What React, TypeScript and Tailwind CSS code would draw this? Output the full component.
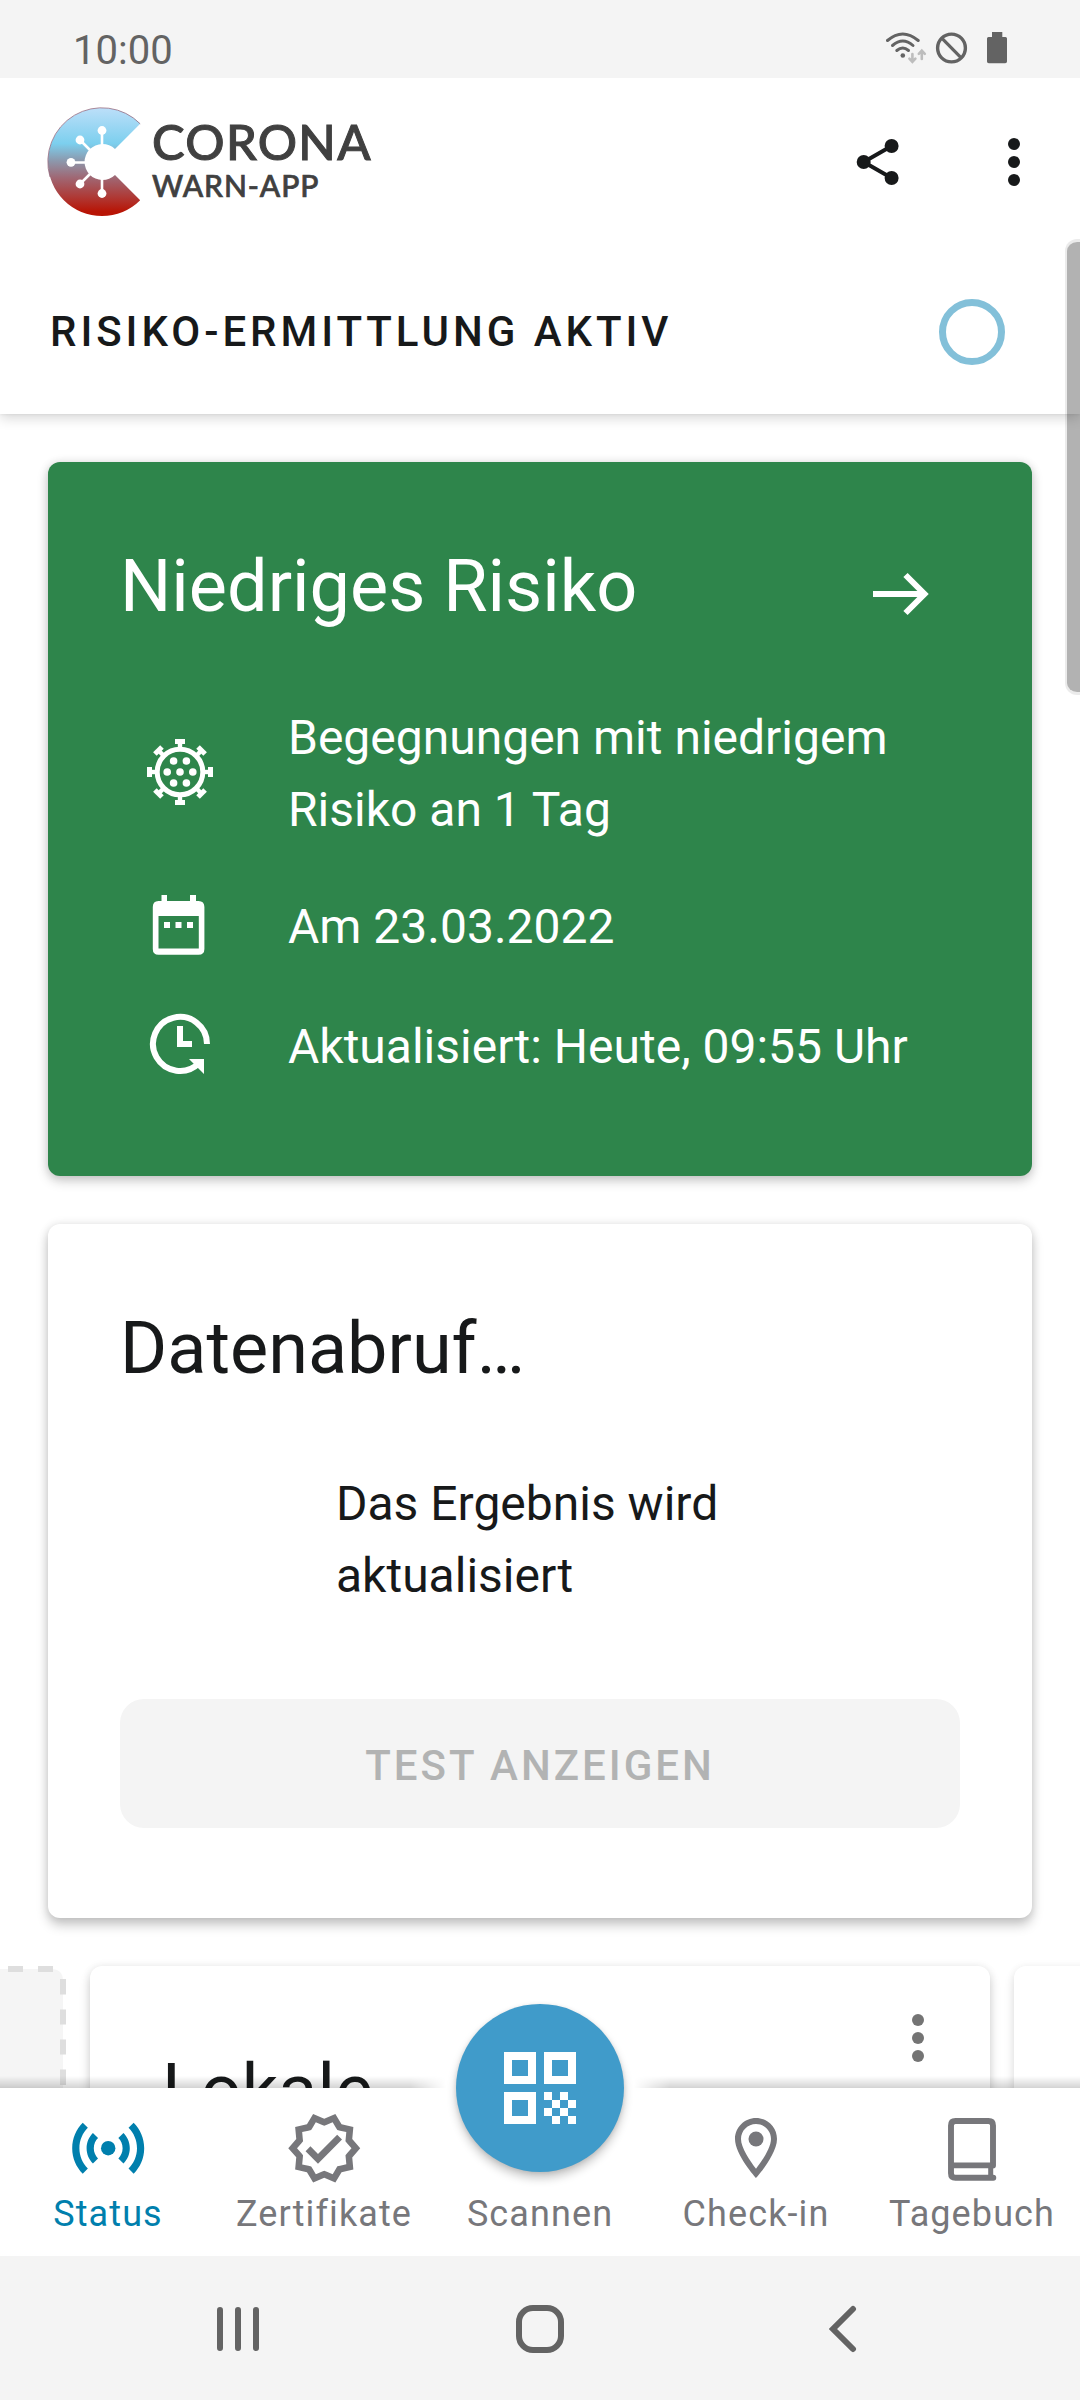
import React from 'react';
import { MdOutlineVerified } from 'react-icons/md';

function StatusBar() {
  return (
    <div className="relative z-20 flex h-[78px] shrink-0 items-center justify-between bg-[#f4f4f4] pl-[73px] pr-[60px] text-[#636363]">
      <span className="pt-[24px] text-[40px] leading-[56px]">10:00</span>
      <svg width="136" height="40" viewBox="884 28 136 40" className="mt-[18px]" fill="none" stroke="#636363">
        <g strokeWidth="3" strokeLinecap="round">
          <path d="M887.5 40.5Q902.6 27.5 918.2 40.5" />
          <path d="M892.5 45.5Q902.8 36.5 913 45.5" />
          <path d="M896.8 50.5Q902.8 45.5 908.5 50.5" />
        </g>
        <circle cx="902.8" cy="55.5" r="2.3" fill="#636363" stroke="none" />
        <g stroke="#bdbdbd" strokeWidth="2.6" strokeLinecap="round">
          <path d="M912.4 54V61M909.4 58.6L912.4 61.8L915.4 58.6" />
          <path d="M921.8 59V51.5M918.8 53.8L921.8 50.6L924.8 53.8" />
        </g>
        <circle cx="951.5" cy="48" r="13.9" strokeWidth="3.4" />
        <path d="M941.8 38.2L961.2 57.8" strokeWidth="3.2" />
        <path d="M992 32H1002.3V37H1005.5Q1007 37 1007 38.5V61.5Q1007 63.3 1005.2 63.3H988.8Q987 63.3 987 61.5V38.5Q987 37 988.5 37H992Z" fill="#636363" stroke="none" />
      </svg>
    </div>
  );
}

function Logo() {
  return (
    <div className="flex items-start">
      <svg width="94" height="110" viewBox="47 107 94 110">
        <defs>
          <linearGradient id="logo" x1="0" y1="108" x2="0" y2="216" gradientUnits="userSpaceOnUse">
            <stop offset="0" stopColor="#bcdff9" />
            <stop offset="0.33" stopColor="#7ccfee" />
            <stop offset="0.48" stopColor="#8b9bb0" />
            <stop offset="0.65" stopColor="#a06672" />
            <stop offset="0.84" stopColor="#b03530" />
            <stop offset="0.96" stopColor="#b81405" />
          </linearGradient>
        </defs>
        <path d="M140.200 123.800A54 54 0 1 0 140.200 200.200L115 175A18 18 0 1 1 115 149Z" fill="url(#logo)" />
        <path d="M140.200 123.800A54 54 0 0 0 50 177" fill="none" stroke="#8c5a70" strokeOpacity="0.7" strokeWidth="1" />
        <g stroke="#fff" strokeWidth="2.600">
          <path d="M102 146V131M90.500 150.500L80 140M86 162.500H71M90.500 173.500L80 184M102 178V193" />
        </g>
        <g fill="#fff">
          <circle cx="102" cy="130.500" r="4.400" />
          <circle cx="80" cy="140" r="4.400" />
          <circle cx="71" cy="162.300" r="4.400" />
          <circle cx="80" cy="184" r="4.400" />
          <circle cx="102" cy="193.500" r="4.400" />
        </g>
      </svg>
      <div className="flex flex-col pl-[11px] pt-[9px] font-['Lato',sans-serif] text-[#404040]">
        <span className="text-[49px] font-medium leading-[50px] tracking-[1.300px] [-webkit-text-stroke:1px_#404040]">CORONA</span>
        <span className="pt-[1px] text-[30px] font-medium leading-[36px] tracking-[0.900px] [-webkit-text-stroke:0.7px_#404040]">WARN-APP</span>
      </div>
    </div>
  );
}

function Dots({ className }: { className: string }) {
  return (
    <svg width="12" height="48" viewBox="0 0 12 48" className={className} fill="currentColor">
      <circle cx="6" cy="6" r="6" />
      <circle cx="6" cy="24" r="6" />
      <circle cx="6" cy="42" r="6" />
    </svg>
  );
}

function Header() {
  return (
    <header className="relative z-10 h-[336px] shrink-0 bg-white shadow-[0_4px_12px_rgba(0,0,0,0.16),0_0_3px_rgba(0,0,0,0.08)]">
      <div className="flex h-[168px] items-center justify-between pl-[47px] pr-[60px]">
        <Logo />
        <div className="flex items-center gap-[108px] text-[#17191a]">
          <svg width="44" height="48" viewBox="856 138 44 48" fill="#17191a">
            <path d="M891.600 146L863.700 162L891.600 178" fill="none" stroke="#17191a" strokeWidth="4" />
            <circle cx="863.700" cy="162" r="7" />
            <circle cx="891.600" cy="146" r="7" />
            <circle cx="891.600" cy="178" r="7" />
          </svg>
          <Dots className="" />
        </div>
      </div>
      <div className="flex h-[171px] items-center justify-between pl-[50px] pr-[75px]">
        <span className="text-[42px] font-medium leading-[56px] tracking-[3.950px] text-[#17191a]">RISIKO-ERMITTLUNG AKTIV</span>
        <div className="size-[66px] rounded-full border-[7px] border-[#83c0d9]" />
      </div>
    </header>
  );
}

function VirusIcon() {
  const spikes = [0, 45, 90, 135, 180, 225, 270, 315];
  const dots = [[0, 0], [-12.8, 0], [12.8, 0], [-6.4, -11], [6.4, -11], [-6.4, 11], [6.4, 11]];
  return (
    <svg width="68" height="68" viewBox="-34 -34 68 68" fill="#fff" className="mb-[4px]">
      <circle r="22.800" fill="none" stroke="#fff" strokeWidth="5" />
      {spikes.map((a) => (
        <g key={a} transform={`rotate(${a})`}>
          <rect x="-2.200" y="-30" width="4.400" height="7" />
          <rect x="-5" y="-33" width="10" height="5" />
        </g>
      ))}
      {dots.map(([x, y]) => (
        <circle key={`${x},${y}`} cx={x} cy={y} r="3.800" />
      ))}
    </svg>
  );
}

function CalendarIcon() {
  return (
    <svg width="54" height="62" viewBox="152 893 54 62" fill="#fff" className="mb-[5px] mr-[2px]">
      <path fillRule="evenodd" d="M161.500 894H167V900H190V894H196V900H198.500Q204.400 900 204.400 906V948Q204.400 953.800 198.500 953.800H158.500Q152.800 953.800 152.800 948V906Q152.800 900 158.500 900H161.500ZM158.500 915V947.500H198.800V915Z" />
      <path d="M164 921H170V927H164ZM175.500 921H181.500V927H175.500ZM187 921H193V927H187Z" />
    </svg>
  );
}

function ClockIcon() {
  return (
    <svg width="62" height="62" viewBox="149 1013 62 62" fill="none" className="mb-[6px]">
      <path d="M207 1044A27 27 0 1 0 199 1063.100" stroke="#fff" strokeWidth="6" />
      <path d="M177 1026H183V1041H192V1047H177ZM189 1059H204V1074Z" fill="#fff" />
    </svg>
  );
}

function RiskRow({ icon, children }: { icon: React.ReactNode; children: React.ReactNode }) {
  return (
    <div className="flex items-center">
      <div className="flex w-[120px] shrink-0 justify-center">{icon}</div>
      <p className="pl-[48px] text-[48px] leading-[72px]">{children}</p>
    </div>
  );
}

function RiskCard() {
  return (
    <section className="h-[714px] shrink-0 rounded-[12px] bg-[#2e854b] px-[72px] text-white shadow-[0_5px_12px_rgba(0,0,0,0.2),0_0_10px_rgba(0,0,0,0.1)]">
      <div className="flex h-[240px] items-start justify-between pt-[83px]">
        <h2 className="text-[72px] leading-[84px]">Niedriges Risiko</h2>
        <svg width="56" height="46" viewBox="0 0 56 46" className="mr-[31px] mt-[26px]" fill="none" stroke="#fff" strokeWidth="6">
          <path d="M0 23H50M32.500 4L51.500 23L32.500 42" />
        </svg>
      </div>
      <RiskRow icon={<VirusIcon />}>
        Begegnungen mit niedrigem
        <br />
        Risiko an 1 Tag
      </RiskRow>
      <div className="pt-[45px]">
        <RiskRow icon={<CalendarIcon />}>Am 23.03.2022</RiskRow>
      </div>
      <div className="pt-[48px]">
        <RiskRow icon={<ClockIcon />}>Aktualisiert: Heute, 09:55 Uhr</RiskRow>
      </div>
    </section>
  );
}

function TestCard() {
  return (
    <section className="flex h-[694px] shrink-0 flex-col rounded-[12px] bg-white px-[72px] text-[#17191a] shadow-[0_7px_12px_rgba(0,0,0,0.22),0_0_10px_rgba(0,0,0,0.1)]">
      <h2 className="pt-[83px] text-[72px] leading-[84px]">Datenabruf…</h2>
      <p className="pl-[216px] pt-[77px] text-[48px] leading-[72px]">
        Das Ergebnis wird
        <br />
        aktualisiert
      </p>
      <button className="mt-[87px] flex h-[129px] items-center justify-center rounded-[24px] bg-[#f4f4f4] pt-[3px] text-[42px] font-medium tracking-[3px] text-[#b2b3b3]">
        TEST ANZEIGEN
      </button>
    </section>
  );
}

function Carousel() {
  return (
    <div className="flex h-[180px] shrink-0 gap-[24px]">
      <svg width="66" height="180" viewBox="0 0 66 180" className="shrink-0">
        <path d="M0 3H51Q63 3 63 15V180H0Z" fill="#f5f5f5" />
        <path d="M8 3H23M38 3H53M63 13V28.500M63 43.500V58.500M63 73.500V88.500M63 103.500V119M63 133.500V149" stroke="#dedede" strokeWidth="6" fill="none" />
      </svg>
      <section className="flex w-[900px] shrink-0 items-start justify-between rounded-[12px] bg-white pl-[72px] pr-[66px] shadow-[0_6px_11px_rgba(0,0,0,0.17),0_0_8px_rgba(0,0,0,0.07)]">
        <h2 className="pt-[83px] text-[72px] leading-[84px] text-[#17191a]">Lokale</h2>
        <Dots className="mt-[48px] text-[#747474]" />
      </section>
      <section className="w-[900px] shrink-0 rounded-[12px] bg-white shadow-[0_6px_11px_rgba(0,0,0,0.12),0_0_8px_rgba(0,0,0,0.05)]" />
    </div>
  );
}

function SensorsIcon() {
  return (
    <svg width="86.400" height="86.400" viewBox="0 0 24 24" fill="currentColor">
      <path d="M7.760 16.240C6.670 15.160 6 13.660 6 12s.67-3.160 1.760-4.240l1.420 1.420C8.450 9.900 8 10.900 8 12c0 1.100.45 2.100 1.170 2.830l-1.410 1.410zM16.240 16.240C17.330 15.160 18 13.660 18 12s-.67-3.160-1.760-4.240l-1.420 1.420C15.550 9.900 16 10.900 16 12c0 1.100-.45 2.100-1.170 2.830l1.410 1.410zM20 12c0 2.210-.9 4.210-2.350 5.650l1.420 1.420C20.880 17.260 22 14.760 22 12s-1.120-5.260-2.930-7.070l-1.420 1.420C19.100 7.790 20 9.790 20 12zM6.350 6.350 4.930 4.930C3.120 6.740 2 9.240 2 12s1.120 5.260 2.930 7.070l1.420-1.420C4.900 16.210 4 14.210 4 12s.9-4.210 2.350-5.650z" />
      <circle cx="12" cy="12" r="2" />
    </svg>
  );
}

function PinIcon() {
  return (
    <svg width="72" height="72" viewBox="0 0 24 24" fill="currentColor">
      <path d="M12 2C8.130 2 5 5.130 5 9c0 5.250 7 13 7 13s7-7.750 7-13c0-3.870-3.130-7-7-7zM7 9c0-2.760 2.240-5 5-5s5 2.240 5 5c0 2.880-2.880 7.190-5 9.880C9.920 16.210 7 11.850 7 9z" />
      <circle cx="12" cy="9" r="2.500" />
    </svg>
  );
}

function BookIcon() {
  return (
    <svg width="72" height="72" viewBox="936 2112 72 72" fill="none" stroke="currentColor">
      <path d="M993 2165.500V2125.500Q993 2121 988.500 2121H955.500Q951 2121 951 2125.500V2173.200Q951 2177.800 955.500 2177.800H993.300" strokeWidth="5.900" strokeLinecap="round" />
      <path d="M951 2165.300H993" strokeWidth="5.800" />
      <path d="M990.700 2166V2177" strokeWidth="5" />
    </svg>
  );
}

function NavItem({ label, active, children }: { label: string; active?: boolean; children?: React.ReactNode }) {
  return (
    <div className={active ? 'flex w-[216px] flex-col items-center text-[#007fad]' : 'flex w-[216px] flex-col items-center text-[#77777b]'}>
      <div className="flex h-[120px] items-center justify-center">{children}</div>
      <span className="-mt-[15px] text-[36px] leading-[42px] tracking-[1.100px]">{label}</span>
    </div>
  );
}

function BottomNav() {
  return (
    <nav className="relative z-10 flex h-[168px] shrink-0 bg-white">
      <div className="absolute -top-[12px] left-0 h-[12px] w-[446px] bg-linear-to-t from-black/17 to-transparent [mask-image:linear-gradient(to_right,black_92%,transparent)]" />
      <div className="absolute -top-[12px] right-0 h-[12px] w-[446px] bg-linear-to-t from-black/17 to-transparent [mask-image:linear-gradient(to_left,black_92%,transparent)]" />
      <NavItem label="Status" active>
        <SensorsIcon />
      </NavItem>
      <NavItem label="Zertifikate">
        <MdOutlineVerified size={78.5} />
      </NavItem>
      <NavItem label="Scannen" />
      <NavItem label="Check-in">
        <PinIcon />
      </NavItem>
      <NavItem label="Tagebuch">
        <BookIcon />
      </NavItem>
      <div className="absolute -top-[84px] left-[456px] flex size-[168px] items-center justify-center rounded-full bg-[#409bca] shadow-[0_6px_10px_rgba(0,0,0,0.22),0_1px_4px_rgba(0,0,0,0.1)]">
        <svg width="72" height="72" viewBox="0 0 9 9" fill="#fff" shapeRendering="crispEdges">
          <path fillRule="evenodd" d="M0 0H4V4H0ZM1 1V3H3V1ZM5 0H9V4H5ZM6 1V3H8V1ZM0 5H4V9H0ZM1 6V8H3V6Z" />
          <path d="M5 5h1v1h-1zM7 5h1v1h-1zM6 6h1v1h-1zM8 6h1v1h-1zM5 7h1v1h-1zM7 7h1v1h-1zM6 8h1v1h-1zM8 8h1v1h-1z" />
        </svg>
      </div>
    </nav>
  );
}

function SystemNav() {
  return (
    <div className="relative z-10 flex h-[144px] shrink-0 items-center bg-[#f4f4f4] pl-[217px] pt-[2px]">
      <svg width="42" height="46" viewBox="0 0 42 46" stroke="#636363" strokeWidth="6" strokeLinecap="round">
        <path d="M3 4V42M21 4V42M39 4V42" />
      </svg>
      <div className="ml-[257px] size-[48px] rounded-[17px] border-[6px] border-[#636363]" />
      <svg width="28" height="48" viewBox="0 0 28 48" className="ml-[265px]" fill="none" stroke="#636363" strokeWidth="6" strokeLinecap="round">
        <path d="M24 4L4 24L24 44" />
      </svg>
    </div>
  );
}

export default function App() {
  return (
    <div className="relative flex h-[2400px] w-[1080px] flex-col overflow-hidden bg-white font-['Roboto',sans-serif]">
      <StatusBar />
      <Header />
      <main className="flex min-h-0 flex-1 flex-col gap-[48px] overflow-hidden pt-[48px]">
        <div className="flex shrink-0 flex-col gap-[48px] px-[48px]">
          <RiskCard />
          <TestCard />
        </div>
        <Carousel />
      </main>
      <BottomNav />
      <SystemNav />
      <div className="absolute right-0 top-[239px] z-20 h-[456px] w-[15px] rounded-l-[12px] border-y-[3px] border-l-[2px] border-black/8 bg-black/30 bg-clip-padding" />
    </div>
  );
}
